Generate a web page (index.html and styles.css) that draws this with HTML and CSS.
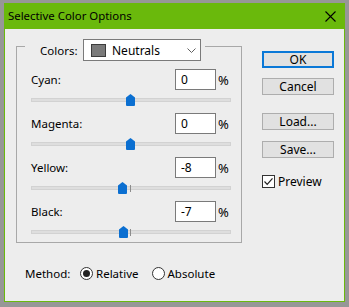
FILE: index.html
```html
<!DOCTYPE html>
<html>
<head>
<meta charset="utf-8">
<link rel="stylesheet" href="styles.css">
</head>
<body>
<div class="window">
  <div class="titlebar">
    <span class="title">Selective Color Options</span>
    <svg class="close" width="11" height="11" viewBox="0 0 11 11"><path d="M0.5 0.5 L10.5 10.5 M10.5 0.5 L0.5 10.5" stroke="#000" stroke-width="1.1" fill="none"/></svg>
  </div>
  <div class="content">
    <div class="main">
      <div class="left">
        <div class="group">
          <div class="legend">
            <span class="legend-label">Colors:</span>
            <div class="select">
              <span class="swatch"></span>
              <span class="select-text">Neutrals</span>
              <svg class="chev" width="9" height="5" viewBox="0 0 9 5"><path d="M0.5 0.5 L4.5 4.5 L8.5 0.5" stroke="#606060" fill="none"/></svg>
            </div>
          </div>
          <div class="field">
            <div class="field-top"><span class="lbl">Cyan:</span><span class="input">0</span><span class="pct">%</span></div>
            <div class="slider"><div class="track"></div><div class="tick"></div><svg class="thumb" style="left:95px" width="9" height="12" viewBox="0 0 9 12"><path d="M4.5 0 L9 3.5 V11 Q9 12 8 12 H1 Q0 12 0 11 V3.5 Z" fill="#0b6fd1"/></svg></div>
          </div>
          <div class="field">
            <div class="field-top"><span class="lbl">Magenta:</span><span class="input">0</span><span class="pct">%</span></div>
            <div class="slider"><div class="track"></div><div class="tick"></div><svg class="thumb" style="left:95px" width="9" height="12" viewBox="0 0 9 12"><path d="M4.5 0 L9 3.5 V11 Q9 12 8 12 H1 Q0 12 0 11 V3.5 Z" fill="#0b6fd1"/></svg></div>
          </div>
          <div class="field">
            <div class="field-top"><span class="lbl">Yellow:</span><span class="input">-8</span><span class="pct">%</span></div>
            <div class="slider"><div class="track"></div><div class="tick"></div><svg class="thumb" style="left:87px" width="9" height="12" viewBox="0 0 9 12"><path d="M4.5 0 L9 3.5 V11 Q9 12 8 12 H1 Q0 12 0 11 V3.5 Z" fill="#0b6fd1"/></svg></div>
          </div>
          <div class="field">
            <div class="field-top"><span class="lbl">Black:</span><span class="input">-7</span><span class="pct">%</span></div>
            <div class="slider"><div class="track"></div><div class="tick"></div><svg class="thumb" style="left:88px" width="9" height="12" viewBox="0 0 9 12"><path d="M4.5 0 L9 3.5 V11 Q9 12 8 12 H1 Q0 12 0 11 V3.5 Z" fill="#0b6fd1"/></svg></div>
          </div>
        </div>
        <div class="method">
          <span class="method-label">Method:</span>
          <span class="radio checked"></span><span class="radio-text">Relative</span>
          <span class="radio second"></span><span class="radio-text">Absolute</span>
        </div>
      </div>
      <div class="right">
        <div class="btn primary">OK</div>
        <div class="btn gap1">Cancel</div>
        <div class="btn gap2">Load...</div>
        <div class="btn gap3">Save...</div>
        <div class="check-row">
          <span class="checkbox"><svg width="11" height="11" viewBox="0 0 11 11"><path d="M1.5 5.5 L4.2 8.3 L9.5 2.3" stroke="#222" stroke-width="1.2" fill="none"/></svg></span>
          <span class="check-text">Preview</span>
        </div>
      </div>
    </div>
  </div>
</div>
</body>
</html>
```
FILE: styles.css
```css
* { box-sizing: border-box; }
html, body { margin: 0; padding: 0; }
body {
  background: #979797;
  width: 349px;
  height: 307px;
  overflow: hidden;
  font-family: "Noto Sans", "Open Sans", sans-serif;
  font-size: 11.5px;
  color: #000;
}
.window {
  margin: 3px 0 0 4px;
  width: 341px;
  height: 299px;
  border: 1px solid #6ab90c;
  border-top: none;
  background: #ededed;
  display: flex;
  flex-direction: column;
}
.titlebar {
  height: 26px;
  background: #6ab90c;
  display: flex;
  align-items: center;
  justify-content: space-between;
  padding: 0 9px 0 4px;
  margin: 0 -1px;
}
.title { line-height: 16px; font-size: 11.4px; }
.close { display: block; margin-top: 1px; }
.content { flex: 1; padding: 10px 10px 0 11px; }
.main { display: flex; }
.left { width: 226px; }
.group {
  margin-top: 7px;
  border: 1px solid #a8a8a8;
  height: 197px;
  padding: 0 10px 0 14px;
}
.legend {
  margin: -8px 0 0 -6px;
  width: 180px;
  height: 22px;
  background: #ededed;
  display: flex;
  align-items: center;
  padding-left: 15px;
}
.legend-label { width: 43px; }
.select {
  width: 118px;
  height: 22px;
  border: 1px solid #7a7a7a;
  background: #fff;
  display: flex;
  align-items: center;
  padding-left: 7px;
}
.swatch {
  width: 15px;
  height: 13px;
  border: 1px solid #3c3c3c;
  background: #7a7a7a;
  margin-right: 6px;
}
.select-text { flex: 1; font-size: 12px; }
.chev { margin-right: 4px; }
.field { margin-top: 8px; }
.field + .field { margin-top: 7px; }
.field-top {
  height: 21px;
  display: flex;
  align-items: center;
}
.lbl { flex: 1; }
.input {
  width: 41px;
  height: 21px;
  border: 1px solid #7a7a7a;
  background: #fff;
  padding-left: 5px;
  line-height: 19px;
  font-size: 12px;
}
.pct { width: 15px; padding-left: 2px; font-size: 13px; }
.slider {
  position: relative;
  height: 12px;
  margin-top: 4px;
  width: 200px;
}
.track {
  position: relative;
  top: 4px;
  height: 4px;
  background: #dedede;
  border: 1px solid #d2d2d2;
}
.tick {
  position: absolute;
  left: 99px;
  top: 3px;
  width: 1px;
  height: 7px;
  background: #8c8c8c;
}
.thumb { position: absolute; top: 0; display: block; }
.method {
  margin-top: 24px;
  display: flex;
  align-items: center;
  height: 13px;
  padding-left: 9px;
}
.method-label { width: 55px; }
.radio {
  width: 13px;
  height: 13px;
  border: 1px solid #333;
  border-radius: 50%;
  background: #fff;
  position: relative;
}
.radio.checked::after {
  content: "";
  position: absolute;
  left: 2px; top: 2px;
  width: 7px; height: 7px;
  border-radius: 50%;
  background: #222;
}
.radio.second { margin-left: 13px; }
.radio-text { padding-left: 3px; }
.right {
  margin-left: 20px;
  width: 72px;
  padding-top: 12px;
  display: flex;
  flex-direction: column;
}
.btn {
  height: 17px;
  border: 1px solid #adadad;
  background: #e1e1e1;
  display: flex;
  align-items: center;
  justify-content: center;
  line-height: 14px;
  font-size: 12px;
}
.btn.primary { border: 2px solid #0a78d7; }
.gap1 { margin-top: 10px; }
.gap2 { margin-top: 18px; }
.gap3 { margin-top: 11px; }
.check-row {
  margin-top: 15px;
  display: flex;
  align-items: center;
}
.checkbox {
  width: 13px;
  height: 13px;
  border: 1px solid #333;
  background: #fff;
  display: flex;
  align-items: center;
  justify-content: center;
}
.checkbox svg { display: block; }
.check-text { padding-left: 3px; font-size: 12px; }
```
